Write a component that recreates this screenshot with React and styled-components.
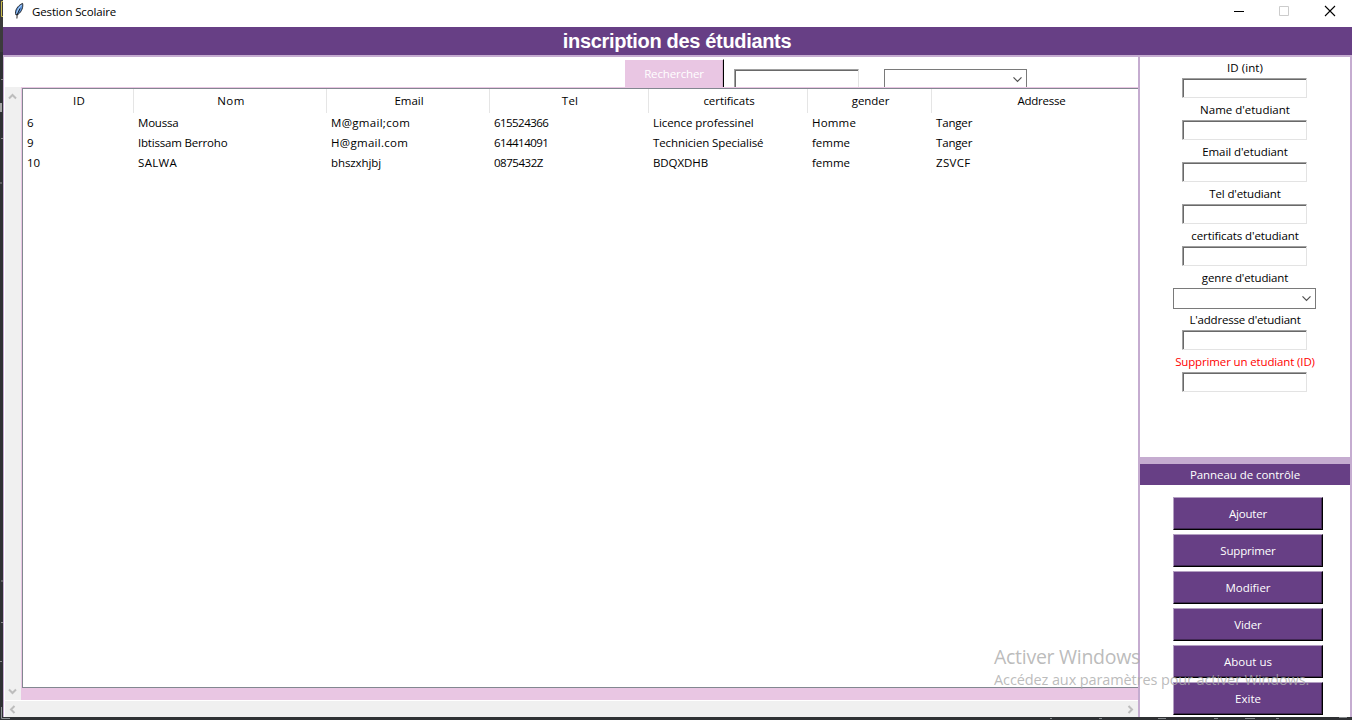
import React from "react";
import styled, { createGlobalStyle } from "styled-components";

const PURPLE = "#673f85";
const LILAC = "#c5acd0";
const PINK = "#e9c6e3";

const GlobalStyle = createGlobalStyle`
  *, *::before, *::after { box-sizing: border-box; }
  body {
    margin: 0;
    overflow: hidden;
    background: #2f3134;
    color: #000;
    font: 11.5px/20px "Open Sans", "Noto Sans", sans-serif;
  }
`;

const Desktop = styled.div`
  position: relative;
  width: 1352px;
  height: 720px;
  padding: 0 0 3px 3px;
  background: #2f3134;
  overflow: hidden;
`;

const Backdrop = styled.svg`
  position: absolute;
  left: 0;
  top: 0;
`;

const Window = styled.div`
  position: relative;
  display: flex;
  flex-direction: column;
  height: 717px;
  background: #fff;
`;

const TitleBar = styled.header`
  display: flex;
  align-items: center;
  flex: none;
  height: 27px;
  padding: 0 16px 5px 10px;
`;

const AppName = styled.span`
  flex: 1;
  margin-left: 7px;
  padding-top: 1px;
`;

const Controls = styled.div`
  display: flex;
  gap: 34px;
`;

const Banner = styled.h1`
  flex: none;
  height: 30px;
  margin: 0;
  padding-right: 1px;
  border-bottom: 2px solid ${LILAC};
  background: ${PURPLE};
  color: #fff;
  font: bold 20px/28px "Liberation Sans", Arial, sans-serif;
  letter-spacing: -0.33px;
  text-align: center;
`;

const Body = styled.div`
  display: flex;
  flex: 1;
  min-height: 0;
`;

const Main = styled.main`
  display: flex;
  flex-direction: column;
  width: 1135px;
  padding-left: 1px;
  border-left: 1px solid ${LILAC};
`;

const SearchBar = styled.div`
  display: flex;
  align-items: flex-start;
  flex: none;
  height: 30px;
  padding: 2px 0 0 619px;
  overflow: hidden;
`;

const SearchButton = styled.button`
  width: 100px;
  height: 31px;
  flex: none;
  padding: 0 0 2px;
  border: 1px solid #000;
  border-top-color: #fff;
  border-left-color: #fff;
  background: ${PINK};
  box-shadow: inset -1px -1px #d2aecb;
  color: #fff;
  font: inherit;
`;

const Entry = styled.input`
  display: block;
  flex: none;
  width: 125px;
  height: 20px;
  margin: ${(p) => p.$margin || "0"};
  padding: 0 2px;
  border: 1px solid #e3e3e3;
  border-top-color: #a0a0a0;
  border-left-color: #a0a0a0;
  box-shadow: inset 1px 1px #696969;
  background: #fff;
  outline: none;
  font: inherit;
`;

const Combo = styled.div`
  display: flex;
  align-items: center;
  justify-content: flex-end;
  flex: none;
  width: 143px;
  height: 21px;
  margin: ${(p) => p.$margin || "0"};
  padding-right: 4px;
  border: 1px solid #7a7a7a;
  background: #fff;
`;

const TableArea = styled.div`
  display: flex;
  flex: none;
  height: 613px;
`;

const VScroll = styled.div`
  display: flex;
  flex-direction: column;
  align-items: center;
  justify-content: space-between;
  width: 16px;
  padding: 6px 1px 5px 0;
  background: #f0f0f0;
`;

const HScroll = styled.div`
  display: flex;
  align-items: center;
  justify-content: space-between;
  flex: none;
  height: 17px;
  padding: 0 4px;
  border-top: 1px solid #fff;
  background: #f0f0f0;
`;

const TreeFrame = styled.div`
  flex: 1;
  min-width: 0;
  padding: 1px 0 12px 1px;
  background: ${PINK};
`;

const Tree = styled.div`
  height: 600px;
  border: 1px solid #828790;
  border-right: 0;
  background: #fff;
  overflow: hidden;
`;

const Row = styled.div`
  display: grid;
  grid-template-columns: 111px 193px 163px 159px 159px 124px 218px;
  height: ${(p) => (p.$head ? 24 : 20)}px;
  line-height: ${(p) => (p.$head ? 24 : 20)}px;
  white-space: nowrap;
`;

const HeadCell = styled.div`
  padding-left: 2px;
  border-right: 1px solid #e5e5e5;
  text-align: center;
`;

const Cell = styled.div`
  padding-left: 4px;
`;

const Side = styled.aside`
  display: flex;
  flex-direction: column;
  flex: 1;
  border: solid ${LILAC};
  border-width: 0 2px;
`;

const Form = styled.form`
  display: flex;
  flex-direction: column;
  align-items: center;
  flex: none;
  height: 407px;
  border-bottom: 7px solid ${LILAC};
`;

const Field = styled.div`
  display: flex;
  flex-direction: column;
  align-items: center;
  height: 42px;
  padding-right: 1px;
`;

const Label = styled.label`
  height: 21px;
  padding-left: 1px;
  line-height: 21px;
  white-space: nowrap;
  color: ${(p) => (p.$danger ? "#f00" : "#000")};
`;

const PanelTitle = styled.h2`
  flex: none;
  height: 21px;
  margin: 0;
  background: ${PURPLE};
  color: #fff;
  font: inherit;
  line-height: 21px;
  text-align: center;
`;

const Actions = styled.div`
  display: flex;
  flex-direction: column;
  gap: 4px;
  padding: 12px 0 0 33px;
`;

const ActionButton = styled.button`
  width: 150px;
  height: 33px;
  padding: 0;
  border: 1px solid #000;
  border-top-color: #b39fc2;
  border-left-color: #b39fc2;
  box-shadow: inset -1px -1px #412854;
  background: ${PURPLE};
  color: #fff;
  font: inherit;
`;

const Watermark = styled.div`
  position: absolute;
  left: 994px;
  top: 644px;
  color: rgba(170, 170, 170, 0.8);
  white-space: nowrap;
  pointer-events: none;
`;

const WatermarkTitle = styled.div`
  font-size: 19.5px;
  line-height: 26px;
  letter-spacing: -0.28px;
`;

const WatermarkText = styled.div`
  font-size: 14.5px;
  line-height: 19px;
  letter-spacing: -0.11px;
`;

const Tracked = styled.span`
  letter-spacing: ${(p) => p.$ls}px;
`;

// Per-string tracking, in pixels, that keeps captions at their native widths.
const tracking = {
  "Gestion Scolaire": -0.14,
  Rechercher: -0.13,
  ID: 0.2,
  Nom: 0.35,
  Tel: 0.2,
  certificats: -0.07,
  gender: -0.06,
  Addresse: -0.23,
  Moussa: -0.2,
  "Ibtissam Berroho": -0.19,
  SALWA: 0.32,
  "M@gmail;com": 0.3,
  "H@gmail.com": 0.3,
  bhszxhjbj: -0.09,
  "615524366": -0.55,
  "614414091": -0.55,
  "0875432Z": -0.46,
  "10": -0.2,
  "Licence professinel": -0.08,
  "Technicien Specialisé": -0.1,
  BDQXDHB: -0.08,
  Homme: 0.18,
  Tanger: -0.17,
  ZSVCF: 0.3,
  "ID (int)": 0.08,
  "Email d'etudiant": -0.08,
  "Tel d'etudiant": -0.13,
  "certificats d'etudiant": -0.1,
  "genre d'etudiant": -0.13,
  "L'addresse d'etudiant": -0.19,
  "Supprimer un etudiant (ID)": -0.14,
  "Panneau de contrôle": -0.06,
  Ajouter: -0.17,
  Supprimer: -0.17,
  Vider: -0.14,
};

const Text = ({ children }) => <Tracked $ls={tracking[children] ?? 0}>{children}</Tracked>;

const Chevron = ({ d, color = "#bdbdbd", w = 9, h = 9, sw = 2 }) => (
  <svg width={w} height={h} viewBox={`0 0 ${w} ${h}`} fill="none" stroke={color} strokeWidth={sw}>
    <path d={d} />
  </svg>
);

const ComboArrow = () => <Chevron w={9} h={7} sw={1.2} color="#505050" d="M.5 1.3l4 4 4-4" />;

const Feather = () => (
  <svg width="12" height="18" viewBox="0 0 12 18">
    <path d="M9.600 1.400C10.400 5 8.800 9.500 5.200 12.300L3 13C1.200 9 4.500 3.500 9.600 1.400z" fill="#5a93dc" stroke="#1c1c1c" strokeWidth=".9" />
    <path d="M8.700 3C6 5.500 4.400 8.500 3.800 11.500" fill="none" stroke="#b5d5fa" strokeWidth="1" />
    <path d="M7 6.500L4.200 12.500 3.900 16.500" fill="none" stroke="#111" strokeWidth=".9" />
  </svg>
);

const columns = ["ID", "Nom", "Email", "Tel", "certificats", "gender", "Addresse"];

const students = [
  ["6", "Moussa", "M@gmail;com", "615524366", "Licence professinel", "Homme", "Tanger"],
  ["9", "Ibtissam Berroho", "H@gmail.com", "614414091", "Technicien Specialisé", "femme", "Tanger"],
  ["10", "SALWA", "bhszxhjbj", "0875432Z", "BDQXDHB", "femme", "ZSVCF"],
];

const fields = [
  { label: "ID (int)" },
  { label: "Name d'etudiant" },
  { label: "Email d'etudiant" },
  { label: "Tel d'etudiant" },
  { label: "certificats d'etudiant" },
  { label: "genre d'etudiant", combo: true },
  { label: "L'addresse d'etudiant" },
  { label: "Supprimer un etudiant (ID)", danger: true },
];

const actions = ["Ajouter", "Supprimer", "Modifier", "Vider", "About us", "Exite"];

export default function App() {
  return (
    <Desktop>
      <GlobalStyle />
      <Backdrop width="1352" height="720" fill="none">
        <path d="M0 0h3v52H0z" fill="#3b3b3c" />
        <path d="M3 1.500H1.500v15H3" stroke="#c9bb4c" />
        <path d="M0 103h2v9H0z" fill="#a5a5a5" />
        <path d="M1 79.500h2M1 138.500h2M0 183h2M1 581h2M1 622.500h2M0 661.500h2" stroke="#8a8a8a" />
        <path d="M1.500 707v11.500H10" stroke="#8f9496" />
        <path d="M1050 718.500h2M1099 718.500h3M1158 718.500h8M1214 718.500h4M1245 718.500h10M1276 718.500h3M1339 717.500h8" stroke="#85898b" />
      </Backdrop>
      <Window>
        <TitleBar>
          <Feather />
          <AppName><Text>Gestion Scolaire</Text></AppName>
          <Controls>
            <svg width="12" height="12" stroke="#000"><path d="M2 6.500h10" /></svg>
            <svg width="12" height="12" fill="none" stroke="#ccc"><path d="M1.500 1.500h9v9h-9z" /></svg>
            <svg width="12" height="12" stroke="#000" strokeWidth="1.100"><path d="M1 1l10 10M11 1L1 11" /></svg>
          </Controls>
        </TitleBar>
        <Banner>inscription des étudiants</Banner>
        <Body>
          <Main>
            <SearchBar>
              <SearchButton><Text>Rechercher</Text></SearchButton>
              <Entry $margin="10px 0 0 10px" />
              <Combo $margin="10px 0 0 25px"><ComboArrow /></Combo>
            </SearchBar>
            <TableArea>
              <VScroll>
                <Chevron h={7} d="M1 5.500l3.500-3.500 3.500 3.500" />
                <Chevron h={7} d="M1 1.500l3.500 3.500 3.500-3.500" />
              </VScroll>
              <TreeFrame>
                <Tree>
                  <Row $head>
                    {columns.map((c) => <HeadCell key={c}><Text>{c}</Text></HeadCell>)}
                  </Row>
                  {students.map((s) => (
                    <Row key={s[0]}>
                      {s.map((v, i) => <Cell key={i}><Text>{v}</Text></Cell>)}
                    </Row>
                  ))}
                </Tree>
              </TreeFrame>
            </TableArea>
            <HScroll>
              <Chevron w={7} d="M5.500 1l-3.500 3.500 3.500 3.500" />
              <Chevron w={7} d="M1.500 1l3.500 3.500-3.500 3.500" />
            </HScroll>
          </Main>
          <Side>
            <Form>
              {fields.map((f) => (
                <Field key={f.label}>
                  <Label $danger={f.danger}><Text>{f.label}</Text></Label>
                  {f.combo ? <Combo><ComboArrow /></Combo> : <Entry />}
                </Field>
              ))}
            </Form>
            <PanelTitle><Text>Panneau de contrôle</Text></PanelTitle>
            <Actions>
              {actions.map((a) => <ActionButton key={a}><Text>{a}</Text></ActionButton>)}
            </Actions>
          </Side>
        </Body>
      </Window>
      <Watermark>
        <WatermarkTitle>Activer Windows</WatermarkTitle>
        <WatermarkText>Accédez aux paramètres pour activer Windows.</WatermarkText>
      </Watermark>
    </Desktop>
  );
}
